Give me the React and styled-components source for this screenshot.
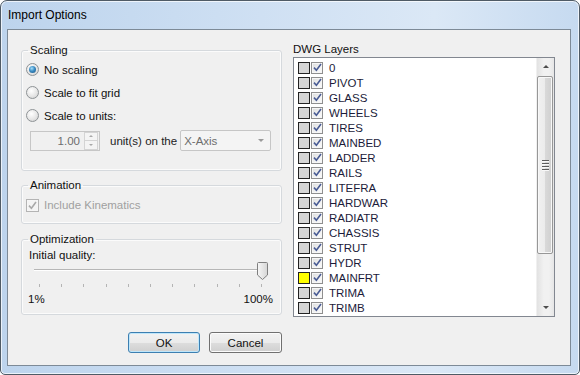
import React from 'react';
import styled, { createGlobalStyle } from 'styled-components';

const GlobalStyle = createGlobalStyle`
  html, body {
    margin: 0;
    padding: 0;
    background: #ffffff;
  }
  body {
    font-family: "Segoe UI", "Liberation Sans", Arial, sans-serif;
    font-size: 11.5px;
    color: #111;
  }
`;

const Window = styled.div`
  width: 580px;
  height: 375px;
  box-sizing: border-box;
  border: 1px solid #4f5b66;
  border-radius: 7px 7px 5px 5px;
  background: linear-gradient(90deg, #bdd4ed 0%, #cfe0f3 45%, #dbe8f6 75%, #c6daf0 100%);
  box-shadow: inset 0 0 0 1px rgba(255, 255, 255, 0.7);
  display: flex;
  flex-direction: column;
  padding: 0 8px 8px 6px;
  overflow: hidden;
`;

const TitleBar = styled.div`
  height: 28px;
  display: flex;
  align-items: center;
  padding-left: 1px;
  font-size: 12px;
  color: #000;
  flex-shrink: 0;
`;

const Client = styled.div`
  flex: 1;
  background: #f0f0f0;
  border: 1px solid #7d8a97;
  display: flex;
  padding: 13px 0 0 13px;
  gap: 11px;
`;

const LeftColumn = styled.div`
  width: 261px;
  display: flex;
  flex-direction: column;
`;

const Group = styled.fieldset`
  margin: 0 0 ${(p) => p.$gap || 0}px 0;
  padding: 0;
  height: ${(p) => p.$height}px;
  box-sizing: border-box;
  border: 1px solid #d5d9dd;
  border-radius: 3px;
  box-shadow: inset 0 0 0 1px #fbfbfb;
  min-width: 0;
`;

const Legend = styled.legend`
  margin-left: 6px;
  padding: 0 2px;
  line-height: 15px;
  color: #111;
`;

const GroupBody = styled.div`
  display: flex;
  flex-direction: column;
  padding: ${(p) => p.$pad || '0 0 0 4px'};
`;

const OptionRow = styled.div`
  display: flex;
  align-items: center;
  height: ${(p) => p.$h || 22}px;
  gap: 5px;
  color: ${(p) => (p.$disabled ? '#a0a0a0' : '#111')};
`;

const Radio = styled.span`
  width: 13px;
  height: 13px;
  box-sizing: border-box;
  border-radius: 50%;
  border: 1px solid #8e9396;
  background: radial-gradient(circle at 40% 35%, #ffffff 0%, #e6e6e6 55%, #cbcbcb 100%);
  display: flex;
  align-items: center;
  justify-content: center;
  &::after {
    content: '';
    width: 7px;
    height: 7px;
    border-radius: 50%;
    background: ${(p) =>
      p.$checked
        ? 'radial-gradient(circle at 40% 35%, #a6e0fb 0%, #3b8cc4 45%, #18527f 100%)'
        : 'transparent'};
  }
`;

const Check = styled.span`
  width: ${(p) => p.$size || 13}px;
  height: ${(p) => p.$size || 13}px;
  box-sizing: border-box;
  border: 1px solid ${(p) => (p.$disabled ? '#b4b4b4' : '#8f8f8f')};
  background: ${(p) =>
    p.$disabled
      ? '#f4f4f4'
      : 'linear-gradient(135deg, #dcdcdc 0%, #f2f2f2 60%, #fbfbfb 100%)'};
  box-shadow: inset 0 0 0 1px #f6f6f6;
  display: flex;
  align-items: center;
  justify-content: center;
  flex-shrink: 0;
`;

const SpinRow = styled.div`
  display: flex;
  align-items: center;
  padding-left: 4px;
  margin-top: 3px;
  height: 21px;
`;

const SpinBox = styled.div`
  width: 70px;
  height: 20px;
  box-sizing: border-box;
  border: 1px solid #c6c6c6;
  background: #f0f0f0;
  display: flex;
  align-items: center;
  justify-content: flex-end;
  padding-right: 1px;
  color: #6d6d6d;
`;

const SpinValue = styled.span`
  margin-right: 4px;
`;

const SpinButtons = styled.div`
  width: 12px;
  height: 16px;
  display: flex;
  flex-direction: column;
  border: 1px solid #d4d4d4;
  background: #f4f4f4;
`;

const SpinHalf = styled.div`
  flex: 1;
  display: flex;
  align-items: center;
  justify-content: center;
  & + & {
    border-top: 1px solid #d4d4d4;
  }
`;

const Arrow = styled.span`
  width: 0;
  height: 0;
  border-left: ${(p) => p.$w || 3}px solid transparent;
  border-right: ${(p) => p.$w || 3}px solid transparent;
  ${(p) => (p.$up ? 'border-bottom' : 'border-top')}: ${(p) => p.$h || 3}px solid ${(p) => p.$color || '#a8a8a8'};
`;

const InlineLabel = styled.span`
  margin: 0 3px 0 10px;
  color: #222;
`;

const Combo = styled.div`
  width: 91px;
  height: 21px;
  box-sizing: border-box;
  border: 1px solid #c6c6c6;
  border-radius: 2px;
  background: #f4f4f4;
  display: flex;
  align-items: center;
  justify-content: space-between;
  padding: 0 6px 0 3px;
  color: #6d6d6d;
`;

const QualityLabel = styled.div`
  line-height: 14px;
  margin-top: 1px;
  padding-left: 7px;
`;

const SliderArea = styled.div`
  position: relative;
  height: 30px;
  margin: 0 0 0 12px;
  width: 230px;
`;

const Track = styled.div`
  position: absolute;
  left: 0;
  right: 0;
  top: 7px;
  height: 1px;
  background: #b6b6b6;
  border-bottom: 1px solid #ffffff;
`;

const Thumb = styled.div`
  position: absolute;
  left: 223px;
  top: 0;
  width: 11px;
  height: 18px;
`;

const Ticks = styled.div`
  position: absolute;
  left: 5px;
  width: 223px;
  top: 22px;
  display: flex;
  justify-content: space-between;
`;

const Tick = styled.span`
  width: 1px;
  height: 3px;
  background: #b4b4b4;
`;

const ScaleLabels = styled.div`
  display: flex;
  justify-content: space-between;
  padding: 0 8px 0 6px;
  line-height: 14px;
`;

const ButtonRow = styled.div`
  display: flex;
  justify-content: flex-end;
  gap: 9px;
  margin-top: 17px;
`;

const Button = styled.button`
  width: ${(p) => p.$w || 73}px;
  height: 21px;
  font: inherit;
  color: #111;
  border-radius: 3px;
  border: 1px solid ${(p) => (p.$primary ? '#3c7fb1' : '#707070')};
  background: linear-gradient(#f2f2f2 0%, #ebebeb 50%, #dddddd 51%, #cfcfcf 100%);
  box-shadow: inset 0 0 0 1px ${(p) => (p.$primary ? '#bfe6fa' : '#fbfbfb')};
  padding: 0;
`;

const RightColumn = styled.div`
  width: 262px;
  display: flex;
  flex-direction: column;
`;

const ListLabel = styled.div`
  line-height: 14px;
  margin-top: -1px;
  margin-bottom: 1px;
`;

const ListBox = styled.div`
  height: 260px;
  box-sizing: border-box;
  border: 1px solid #828790;
  background: #fff;
  display: flex;
  overflow: hidden;
`;

const Rows = styled.div`
  flex: 1;
  padding-top: 2px;
  overflow: hidden;
`;

const LayerRow = styled.div`
  height: 15px;
  display: flex;
  align-items: center;
  padding-left: 4px;
  gap: 1px;
  color: #1c1c3a;
`;

const Swatch = styled.span`
  width: 12px;
  height: 12px;
  box-sizing: border-box;
  border: 1px solid #222;
  background: ${(p) => p.$color};
  flex-shrink: 0;
`;

const LayerName = styled.span`
  margin-left: 5px;
`;

const ScrollBar = styled.div`
  width: 17px;
  display: flex;
  flex-direction: column;
  background: linear-gradient(90deg, #e2e2e2, #f1f1f1 40%, #f1f1f1 70%, #e6e6e6);
  border-left: 1px solid #f0f0f0;
`;

const ScrollButton = styled.div`
  height: 17px;
  display: flex;
  align-items: center;
  justify-content: center;
  flex-shrink: 0;
`;

const ScrollTrack = styled.div`
  flex: 1;
  display: flex;
  flex-direction: column;
  padding: 1px 1px 0 0;
`;

const ScrollThumb = styled.div`
  height: 178px;
  box-sizing: border-box;
  border: 1px solid #979797;
  border-radius: 2px;
  background: linear-gradient(90deg, #f1f1f1 0%, #ebebeb 50%, #d9d9d9 51%, #cfcfcf 100%);
  box-shadow: inset 0 0 0 1px #f8f8f8;
  display: flex;
  flex-direction: column;
  align-items: center;
  justify-content: center;
  gap: 1px;
`;

const Grip = styled.span`
  width: 7px;
  height: 1px;
  background: #5c5c5c;
  box-shadow: 0 1px 0 #f8f8f8;
  margin-bottom: 1px;
`;

const CheckMark = ({ color }) => (
  <svg width="9" height="9" viewBox="0 0 9 9">
    <path d="M1 4.6 L3.4 7.2 L8 1" fill="none" stroke={color} strokeWidth="1.6" />
  </svg>
);

const ThumbShape = () => (
  <svg width="11" height="18" viewBox="0 0 11 18">
    <defs>
      <linearGradient id="tg" x1="0" y1="0" x2="1" y2="0">
        <stop offset="0" stopColor="#f7f7f7" />
        <stop offset="1" stopColor="#d6d6d6" />
      </linearGradient>
    </defs>
    <path d="M1.5 0.5 H9.5 Q10.5 0.5 10.5 1.5 V13 L5.5 17.5 L0.5 13 V1.5 Q0.5 0.5 1.5 0.5 Z" fill="url(#tg)" stroke="#7f7f7f" />
  </svg>
);

const layers = [
  '0', 'PIVOT', 'GLASS', 'WHEELS', 'TIRES', 'MAINBED', 'LADDER', 'RAILS',
  'LITEFRA', 'HARDWAR', 'RADIATR', 'CHASSIS', 'STRUT', 'HYDR', 'MAINFRT',
  'TRIMA', 'TRIMB',
];

function App() {
  return (
    <>
      <GlobalStyle />
      <Window>
        <TitleBar>Import Options</TitleBar>
        <Client>
          <LeftColumn>
            <Group $height={128} $gap={7}>
              <Legend>Scaling</Legend>
              <GroupBody>
                <OptionRow $h={23}>
                  <Radio $checked />
                  No scaling
                </OptionRow>
                <OptionRow $h={23}>
                  <Radio />
                  Scale to fit grid
                </OptionRow>
                <OptionRow $h={23}>
                  <Radio />
                  Scale to units:
                </OptionRow>
                <SpinRow>
                  <SpinBox>
                    <SpinValue>1.00</SpinValue>
                    <SpinButtons>
                      <SpinHalf><Arrow $up $w={2} $h={2} /></SpinHalf>
                      <SpinHalf><Arrow $w={2} $h={2} /></SpinHalf>
                    </SpinButtons>
                  </SpinBox>
                  <InlineLabel>unit(s) on the</InlineLabel>
                  <Combo>
                    X-Axis
                    <Arrow $w={3} $h={3} $color="#9a9a9a" />
                  </Combo>
                </SpinRow>
              </GroupBody>
            </Group>
            <Group $height={46} $gap={8}>
              <Legend>Animation</Legend>
              <GroupBody>
                <OptionRow $h={24} $disabled>
                  <Check $disabled>
                    <CheckMark color="#a9a9a9" />
                  </Check>
                  Include Kinematics
                </OptionRow>
              </GroupBody>
            </Group>
            <Group $height={83}>
              <Legend>Optimization</Legend>
              <QualityLabel>Initial quality:</QualityLabel>
              <SliderArea>
                <Track />
                <Thumb>
                  <ThumbShape />
                </Thumb>
                <Ticks>
                  {Array.from({ length: 11 }).map((_, i) => (
                    <Tick key={i} />
                  ))}
                </Ticks>
              </SliderArea>
              <ScaleLabels>
                <span>1%</span>
                <span>100%</span>
              </ScaleLabels>
            </Group>
            <ButtonRow>
              <Button $primary $w={72}>OK</Button>
              <Button>Cancel</Button>
            </ButtonRow>
          </LeftColumn>
          <RightColumn>
            <ListLabel>DWG Layers</ListLabel>
            <ListBox>
              <Rows>
                {layers.map((name) => (
                  <LayerRow key={name}>
                    <Swatch $color={name === 'MAINFRT' ? '#ffff00' : '#d6d6d6'} />
                    <Check $size={12}>
                      <CheckMark color="#4a5c94" />
                    </Check>
                    <LayerName>{name}</LayerName>
                  </LayerRow>
                ))}
              </Rows>
              <ScrollBar>
                <ScrollButton>
                  <Arrow $up $w={3} $h={3} $color="#4d4d4d" />
                </ScrollButton>
                <ScrollTrack>
                  <ScrollThumb>
                    <Grip />
                    <Grip />
                    <Grip />
                    <Grip />
                  </ScrollThumb>
                </ScrollTrack>
                <ScrollButton>
                  <Arrow $w={3} $h={3} $color="#4d4d4d" />
                </ScrollButton>
              </ScrollBar>
            </ListBox>
          </RightColumn>
        </Client>
      </Window>
    </>
  );
}

export default App;
